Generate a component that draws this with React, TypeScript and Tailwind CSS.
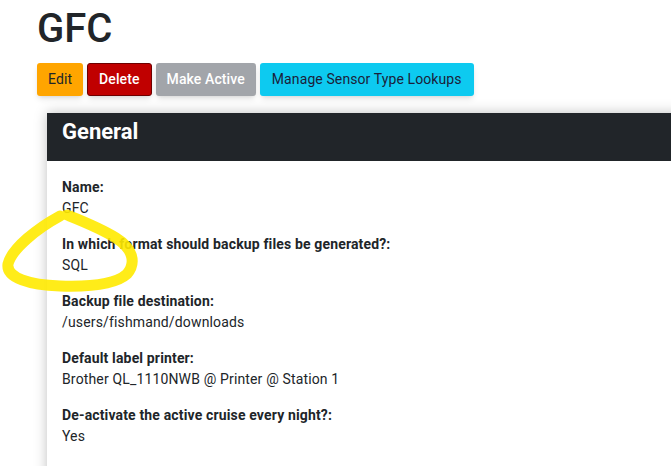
import React from 'react'

const fields = [
  { label: 'Name:', value: 'GFC' },
  { label: 'In which format should backup files be generated?:', value: 'SQL' },
  { label: 'Backup file destination:', value: '/users/fishmand/downloads' },
  { label: 'Default label printer:', value: 'Brother QL_1110NWB @ Printer @ Station 1' },
  { label: 'De-activate the active cruise every night?:', value: 'Yes' },
]

export default function App() {
  return (
    <div
      className="relative w-[671px] h-[466px] overflow-hidden bg-white text-[#212529]"
      style={{ fontFamily: 'Roboto, "Liberation Sans", sans-serif' }}
    >
      <div className="pl-[37px] pt-[5px]">
        {/* Title */}
        <h1 className="text-[40px] leading-[48px] font-medium mb-[10px]">GFC</h1>

        {/* Actions */}
        <div className="flex gap-[4px] text-[14px] tracking-[0.1px]">
          <button className="h-[33px] px-[11px] rounded-[3px] bg-[#ffa500] text-[#212529] shadow-md">Edit</button>
          <button className="h-[33px] px-[11px] rounded-[3px] bg-[#c00000] border border-[#6e0000] text-white font-medium shadow-md">Delete</button>
          <button className="h-[33px] px-[11px] rounded-[3px] bg-[#a2a5aa] text-white font-medium shadow-md">Make Active</button>
          <button className="h-[33px] px-[12px] rounded-[3px] bg-[#0dcaf0] text-[#1b1e3a] shadow-md">Manage Sensor Type Lookups</button>
        </div>

        {/* General card */}
        <div className="mt-[17px] ml-[10px] w-[680px] shadow-[0_0_12px_rgba(0,0,0,0.25)] bg-white">
          <div className="h-[48px] bg-[#212529] px-[15px] pt-[6px]">
            <h2 className="text-[22px] leading-[26px] font-bold text-white">General</h2>
          </div>
          <div className="px-[15px] pt-[16px] pb-[40px] flex flex-col gap-[15px] text-[14px] leading-[21px] tracking-[0.15px]">
            {fields.map(f => (
              <div key={f.label}>
                <div className="font-bold">{f.label}</div>
                <div>{f.value}</div>
              </div>
            ))}
          </div>
        </div>
      </div>

      {/* Highlighter annotation */}
      <svg className="absolute left-0 top-0 pointer-events-none" width="671" height="466">
        <path
          d="M60 216 C38 228 12 248 8 264 C6 278 30 285 60 286 C90 287 116 284 127 274 C137 262 132 248 116 238 C100 228 82 221 67 215"
          fill="none"
          stroke="#ffea00"
          strokeOpacity="0.9"
          strokeWidth="11"
          strokeLinecap="round"
        />
      </svg>
    </div>
  )
}
